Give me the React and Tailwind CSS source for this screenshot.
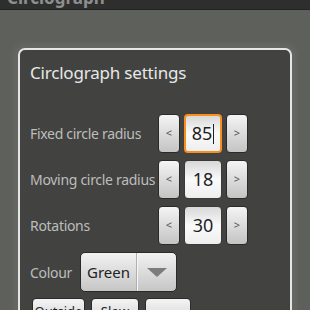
import React from "react";

const font = { fontFamily: '"Noto Sans", "Open Sans", sans-serif' };

function ArrowButton({ label }) {
  return (
    <div className="w-[22px] h-[39px] rounded-[4px] border border-[#2a2a2a] bg-gradient-to-b from-[#f4f4f4] to-[#c4c4c4] flex items-center justify-center text-[11px] text-[#555]">
      {label}
    </div>
  );
}

function NumberField({ value, focused }) {
  return (
    <div
      className={
        "w-[38px] h-[39px] rounded-[4px] flex items-center justify-center text-[18px] text-[#1e1e1e] bg-gradient-to-b from-[#d8d8d8] via-[#fafafa] to-[#eeeeee] " +
        (focused ? "border-2 border-[#f7901e]" : "border border-[#3a3a3a]")
      }
    >
      <span>{value}</span>
      {focused && <span className="w-px h-[20px] bg-[#222] ml-px" />}
    </div>
  );
}

function Stepper({ value, focused }) {
  return (
    <div className="flex items-center gap-[4px]">
      <ArrowButton label="<" />
      <NumberField value={value} focused={focused} />
      <ArrowButton label=">" />
    </div>
  );
}

export default function App() {
  const rows = [
    { label: "Fixed circle radius", value: "85", focused: true },
    { label: "Moving circle radius", value: "18" },
    { label: "Rotations", value: "30" },
  ];

  return (
    <div className="w-[310px] h-[310px] overflow-hidden bg-[#5e605b]" style={font}>
      <div className="h-[10px] bg-[#2e2e2e] border-b border-[#232323] overflow-hidden">
        <div className="-mt-[12px] pl-[7px] text-[17px] font-bold text-[#8e8e8e] leading-[20px]">
          Circlograph
        </div>
      </div>

      <div className="mt-[38px] ml-[18px] w-[274px] h-[300px] rounded-[7px] border-2 border-[#e6e6e6] bg-[#424340] shadow-[0_0_6px_4px_#676964]">
        <div className="pl-[10px] pt-[11px] text-[17px] tracking-[-0.2px] text-[#e8e8e8] leading-[24px]">
          Circlograph settings
        </div>

        <div className="mt-[29px] pl-[10px] grid grid-cols-[128px_auto] gap-y-[7px] items-center">
          {rows.map((r) => (
            <React.Fragment key={r.label}>
              <div className="text-[14px] tracking-[-0.3px] text-[#bdbdbd] whitespace-nowrap">{r.label}</div>
              <Stepper value={r.value} focused={r.focused} />
            </React.Fragment>
          ))}
        </div>

        <div className="mt-[7px] pl-[10px] flex items-center gap-[8px]">
          <div className="text-[14px] tracking-[-0.3px] text-[#bdbdbd]">Colour</div>
          <div className="w-[97px] h-[40px] rounded-[5px] border border-[#2a2a2a] bg-gradient-to-b from-[#f2f2f2] to-[#c6c6c6] flex">
            <div className="w-[56px] flex items-center pl-[6px] text-[15px] text-[#222] border-r border-[#b0b0b0]">
              Green
            </div>
            <div className="flex-1 flex items-center justify-center border-l border-[#f6f6f6]">
              <svg width="20" height="9" viewBox="0 0 20 9">
                <polygon points="0,0 20,0 10,9" fill="#7c7c7c" />
              </svg>
            </div>
          </div>
        </div>

        <div className="mt-[6px] pl-[12px] flex gap-[6px]">
          <div className="w-[53px] h-[36px] rounded-[4px] border border-[#2a2a2a] bg-gradient-to-b from-[#f4f4f4] to-[#c6c6c6] text-[13px] text-[#222] text-center pt-[3px]">
            Outside
          </div>
          <div className="w-[48px] h-[36px] rounded-[4px] border border-[#2a2a2a] bg-gradient-to-b from-[#f4f4f4] to-[#c6c6c6] text-[13px] text-[#222] text-center pt-[3px]">
            Slow
          </div>
          <div className="w-[46px] h-[36px] rounded-[4px] border border-[#2a2a2a] bg-gradient-to-b from-[#f4f4f4] to-[#c6c6c6]" />
        </div>
      </div>
    </div>
  );
}
